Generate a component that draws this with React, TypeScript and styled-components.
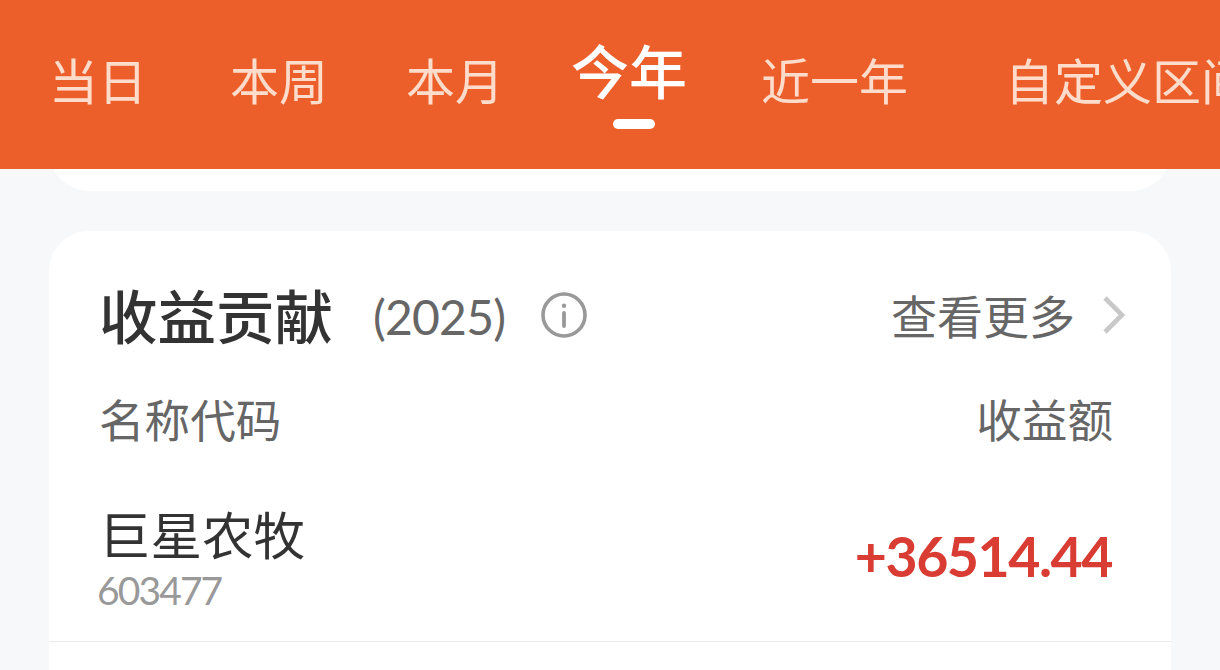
import React from "react";
import styled, { createGlobalStyle } from "styled-components";

const tabs = [
  { label: "当日", left: 0 },
  { label: "本周", left: 83 },
  { label: "本月", left: 78 },
  { label: "今年", left: 67, active: true },
  { label: "近一年", left: 74 },
  { label: "自定义区间", left: 97 },
];

const App: React.FC = () => {
  return (
    <Page>
      <GlobalStyle />
      <TabBar>
        {tabs.map((tab) => (
          <Tab key={tab.label} $left={tab.left} $active={tab.active}>
            {tab.label}
            {tab.active && <Indicator />}
          </Tab>
        ))}
      </TabBar>
      <PreviousCardClip>
        <PreviousCard />
      </PreviousCardClip>
      <Card>
        <CardHeader>
          <Title>收益贡献</Title>
          <Year>(2025)</Year>
          <InfoIcon viewBox="0 0 46 46" fill="none">
            <circle cx="23" cy="23" r="21" stroke="#999" strokeWidth="3.6" />
            <circle cx="23" cy="13.7" r="2.2" fill="#999" />
            <path d="M23 21v13" stroke="#999" strokeWidth="3.8" strokeLinecap="round" />
          </InfoIcon>
          <More>
            查看更多
            <Chevron viewBox="0 0 24 38" fill="none">
              <path d="M3 2l17 17L3 36" stroke="#c8c8c8" strokeWidth="4.6" />
            </Chevron>
          </More>
        </CardHeader>
        <ColumnNames>
          <span>名称代码</span>
          <span>收益额</span>
        </ColumnNames>
        <StockRow>
          <div>
            <StockName>巨星农牧</StockName>
            <StockCode>603477</StockCode>
          </div>
          <Profit>+36514.44</Profit>
        </StockRow>
      </Card>
    </Page>
  );
};

const GlobalStyle = createGlobalStyle`
  * {
    box-sizing: border-box;
  }

  body {
    margin: 0;
    overflow: hidden;
    font-family: Lato, "Noto Sans CJK SC", sans-serif;
  }
`;

const Page = styled.div`
  width: 1220px;
  height: 670px;
  overflow: hidden;
  background: #f6f8fa;
`;

const TabBar = styled.nav`
  display: flex;
  height: 169px;
  padding-left: 49px;
  overflow: hidden;
  background: #ec5f2b;
`;

const Tab = styled.div<{ $left: number; $active?: boolean }>`
  display: flex;
  flex: none;
  flex-direction: column;
  align-items: center;
  margin-left: ${({ $left }) => $left}px;
  padding-top: ${({ $active }) => ($active ? 37 : 46)}px;
  color: ${({ $active }) => ($active ? "#fff" : "#fedccb")};
  font-size: ${({ $active }) => ($active ? 58 : 49)}px;
  font-weight: ${({ $active }) => ($active ? 500 : 400)};
  line-height: 70px;
  white-space: nowrap;
`;

const Indicator = styled.span`
  width: 42px;
  height: 10px;
  margin: 12px 0 0 10px;
  border-radius: 5px;
  background: #fff;
`;

const PreviousCardClip = styled.div`
  display: flex;
  align-items: flex-end;
  height: 22px;
  margin: 0 49px 40px;
  overflow: hidden;
`;

const PreviousCard = styled.div`
  flex: 1 0 auto;
  height: 100px;
  border-radius: 40px;
  background: #fff;
`;

const Card = styled.section`
  height: 500px;
  margin: 0 49px;
  border-radius: 40px;
  background: #fff;
`;

const CardHeader = styled.header`
  display: flex;
  align-items: center;
  height: 169px;
  padding: 0 45px 0 50px;
`;

const Title = styled.h2`
  color: #333;
  margin: 0;
  font-size: 58.5px;
  font-weight: 500;
  line-height: 80px;
`;

const Year = styled.span`
  margin: 2px 0 0 40px;
  color: #666;
  font-size: 48px;
  letter-spacing: -0.8px;
`;

const InfoIcon = styled.svg`
  width: 46px;
  height: 46px;
  margin: -1px 0 0 36px;
`;

const More = styled.div`
  display: flex;
  align-items: center;
  height: 66px;
  margin: 2px 0 0 auto;
  color: #666;
  font-size: 46px;
  line-height: 66px;
`;

const Chevron = styled.svg`
  width: 24px;
  height: 38px;
  margin: -4px 0 0 27px;
`;

const ColumnNames = styled.div`
  display: flex;
  justify-content: space-between;
  padding: 0 58px 0 50px;
  color: #666;
  font-size: 45.6px;
  line-height: 42px;
`;

const StockRow = styled.div`
  display: flex;
  align-items: center;
  justify-content: space-between;
  height: 200px;
  padding: 28px 59px 0 50px;
  border-bottom: 1px solid #ebebeb;
`;

const StockName = styled.div`
  color: #333;
  font-size: 51.5px;
  line-height: 70px;
`;

const StockCode = styled.div`
  margin: -2px 0 0 -2px;
  color: #999;
  font-size: 39px;
  line-height: 44px;
  letter-spacing: -1.9px;
`;

const Profit = styled.div`
  color: #d93c33;
  font-size: 55.5px;
  font-weight: 700;
  letter-spacing: -1.5px;
`;

export default App;
